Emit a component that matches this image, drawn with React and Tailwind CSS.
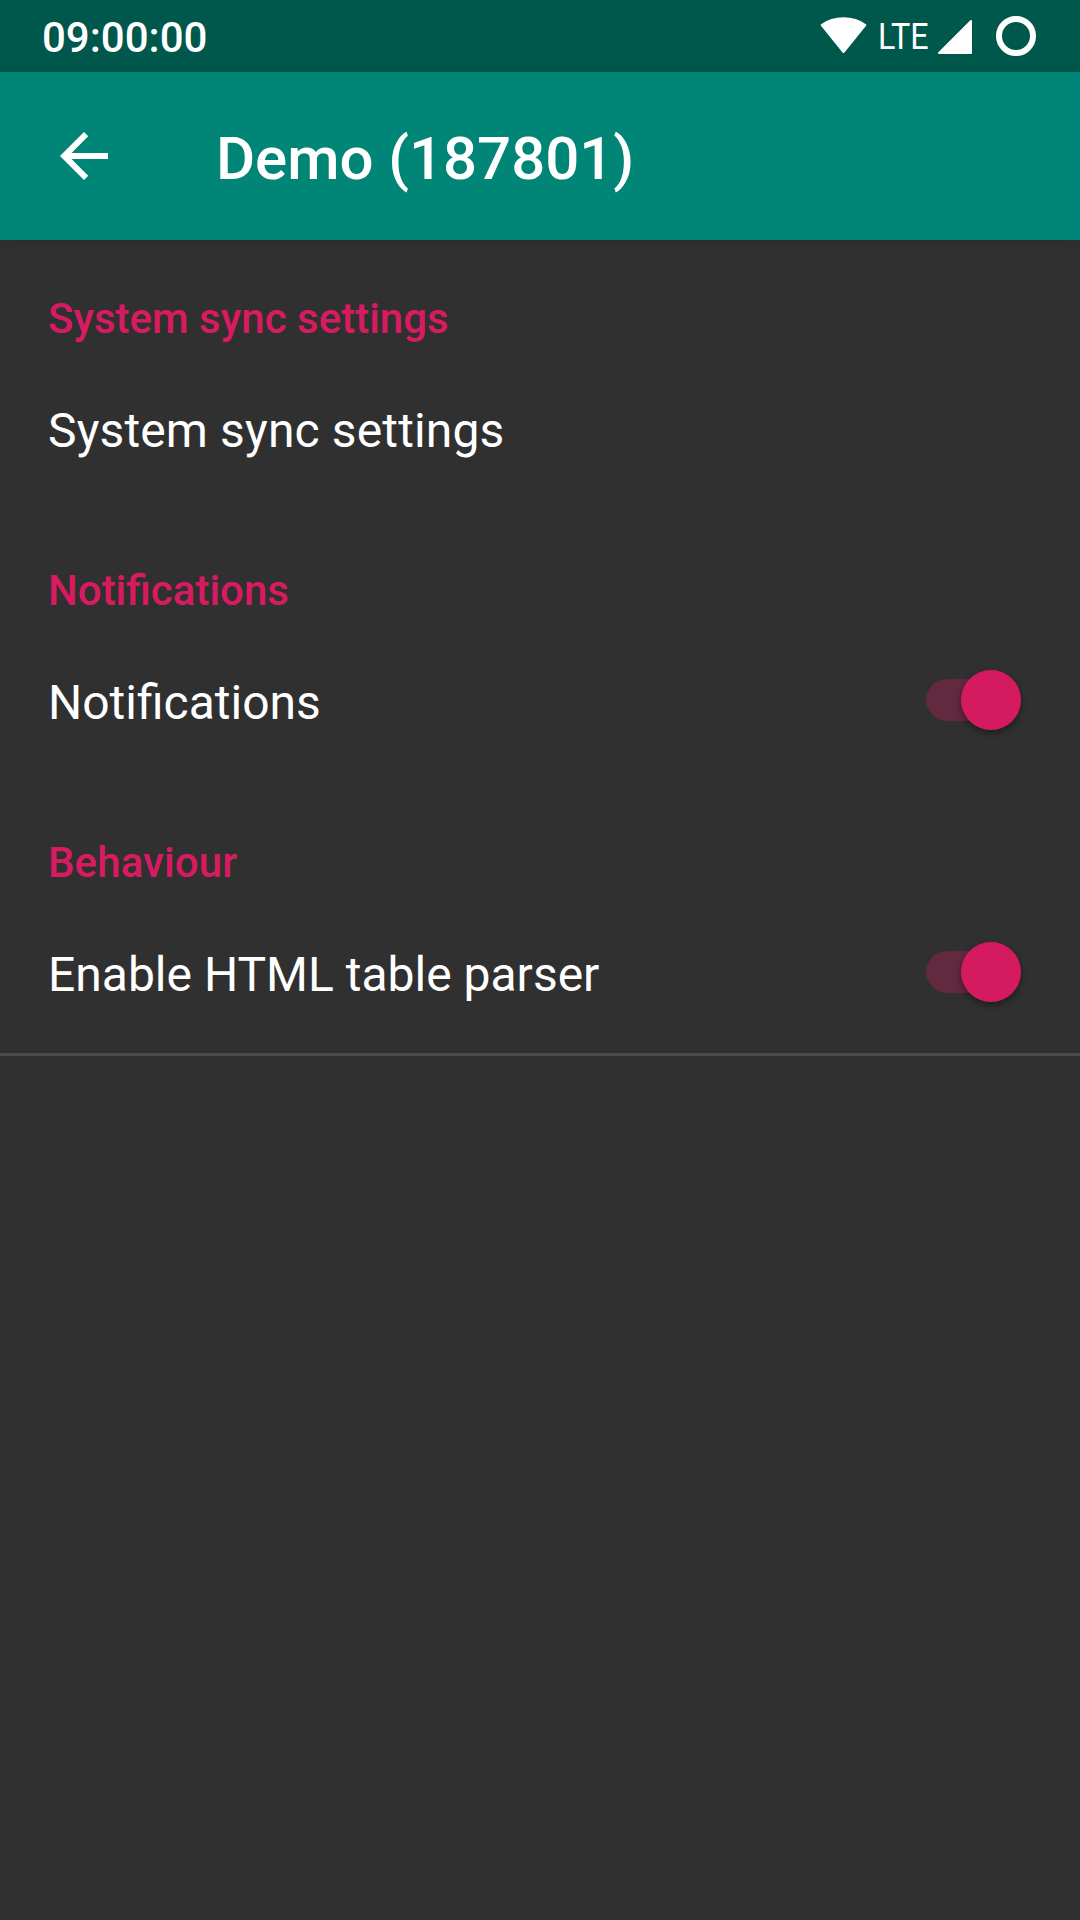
function StatusBar() {
  return (
    <div className="flex h-[72px] items-center justify-between bg-[#00574b] pl-[42px] pr-[44px]">
      <span className="pt-[3px] text-[42px] font-medium leading-[69px]">09:00:00</span>
      <div className="flex h-[72px] items-center">
        <svg className="mr-[10px] h-[38px] w-[48px]" viewBox="0 0 48 38" fill="white" stroke="white" strokeWidth="2" strokeLinejoin="round">
          <path d="M23.500 35 L1.700 8 C14 -1 33 -1 45.300 8 Z" />
        </svg>
        <span className="mr-[8px] inline-block w-[51px] origin-left scale-x-[0.86] text-[37.500px] leading-[72px] text-white">LTE</span>
        <svg className="mr-[23px] mt-px h-[36px] w-[36px]" viewBox="0 0 36 36" fill="white" stroke="white" strokeWidth="2" strokeLinejoin="round">
          <path d="M2 34 L34 2 V34 Z" />
        </svg>
        <svg className="h-[40px] w-[40px]" viewBox="0 0 40 40" fill="none" stroke="white" strokeWidth="6">
          <circle cx="20" cy="20" r="17" />
        </svg>
      </div>
    </div>
  );
}

function Switch() {
  return (
    <div className="-mt-[7px] flex h-[60px] w-[96px] items-center">
      <div className="h-[42px] w-[60px] shrink-0 rounded-full bg-[#63293e]" />
      <div className="-ml-[25px] size-[60px] shrink-0 rounded-full bg-[#d41b5f] shadow-[0_3px_6px_rgba(0,0,0,0.4)]" />
    </div>
  );
}

function Section({ title, label, toggle, labelClass = "", titleClass = "" }) {
  return (
    <section className="h-[272px] px-[48px] pt-[47px]">
      <h2 className={`h-[64px] text-[42px] font-medium leading-[64px] text-[#d81b60] ${titleClass}`}>{title}</h2>
      <div className="flex h-[160px] items-center justify-between pr-[10px]">
        <span className={`text-[48px] leading-[64px] ${labelClass}`}>{label}</span>
        {toggle && <Switch />}
      </div>
    </section>
  );
}

export default function App() {
  return (
    <main className="h-[1920px] w-[1080px] overflow-hidden bg-[#303030] font-['Roboto',sans-serif] text-white">
      <StatusBar />
      <header className="flex h-[168px] items-center bg-[#008577] pl-[60px] shadow-[0_4px_12px_rgba(0,0,0,0.1)]">
        <svg className="h-[48px] w-[48px]" viewBox="0 0 48 48" fill="white">
          <path d="M48 21 H11.500 L28.200 4.200 L24 0 L0 24 L24 48 L28.200 43.800 L11.500 27 H48 Z" />
        </svg>
        <h1 className="ml-[108px] pt-[5px] text-[60px] font-medium leading-[80px] tracking-[-0.05px]">Demo (187801)</h1>
      </header>
      <Section title="System sync settings" label="System sync settings" labelClass="tracking-[0.14px]" />
      <Section title="Notifications" label="Notifications" toggle />
      <Section title="Behaviour" label="Enable HTML table parser" titleClass="tracking-[0.1px]" toggle />
      <hr className="-mt-[3px] h-[3px] border-0 bg-[#494949]" />
    </main>
  );
}
